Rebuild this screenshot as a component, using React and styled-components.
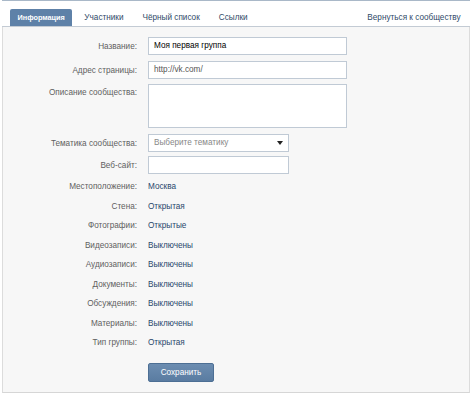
import React from 'react';
import styled, { createGlobalStyle } from 'styled-components';

const Global = createGlobalStyle`
  body {
    margin: 0;
    background: #fff;
    font-family: "Liberation Sans", Arial, sans-serif;
    font-size: 8.2px;
  }
`;

const Page = styled.div`
  width: 468px;
  margin-left: 2px;
  border-top: 1px solid #a9b8c8;
`;

const TabBar = styled.div`
  display: flex;
  align-items: flex-end;
  height: 25px;
  padding: 0 0 0 8px;
  background: #fff;
  border-bottom: 1px solid #c3cbd4;
`;

const Tab = styled.div`
  padding: 0 ${p => (p.$active ? 7.5 : 9.5)}px;
  height: 17px;
  line-height: 17px;
  margin-right: ${p => (p.$active ? 2.5 : 0)}px;
  border-radius: 2px 2px 0 0;
  font-size: ${p => (p.$active ? 7.3 : 8.2)}px;
  color: ${p => (p.$active ? '#fff' : '#2f4a68')};
  background: ${p => (p.$active ? '#5e81a8' : 'transparent')};
  font-weight: ${p => (p.$active ? 'bold' : 'normal')};
  white-space: nowrap;
`;

const Spacer = styled.div`
  flex: 1;
`;

const Panel = styled.div`
  background: #f7f7f7;
  border-left: 1px solid #dcdcdc;
  border-right: 1px solid #dcdcdc;
  border-bottom: 1px solid #d6d6d6;
  padding: 10px 0 0;
  height: 366px;
  box-sizing: border-box;
`;

const Row = styled.div`
  display: grid;
  grid-template-columns: 134px 1fr;
  column-gap: 11px;
  align-items: ${p => (p.$top ? 'start' : 'center')};
  margin-bottom: ${p => p.$gap ?? 6}px;
  height: ${p => p.$h || 18}px;
`;

const Label = styled.div`
  text-align: right;
  color: #5f5f5f;
  padding-top: ${p => (p.$top ? 4 : 0)}px;
`;

const Value = styled.div`
  color: #29476c;
`;

const Input = styled.div`
  box-sizing: border-box;
  width: ${p => p.$w}px;
  height: ${p => p.$h || 18}px;
  background: #fff;
  border: 1px solid #c0cad5;
  padding: 3px 5px;
  color: ${p => (p.$muted ? '#555' : '#000')};
  line-height: 10px;
`;

const Select = styled(Input)`
  display: flex;
  align-items: center;
  justify-content: space-between;
  color: #888;
  padding-right: 5px;
`;

const Button = styled.div`
  width: 66px;
  height: 19px;
  margin-top: 10px;
  line-height: 17px;
  text-align: center;
  color: #fff;
  background: linear-gradient(#6c8db1, #5a7ca1);
  border: 1px solid #4d6f94;
  border-radius: 2px;
  box-sizing: border-box;
`;

const info = [
  ['Местоположение:', 'Москва'],
  ['Стена:', 'Открытая'],
  ['Фотографии:', 'Открытые'],
  ['Видеозаписи:', 'Выключены'],
  ['Аудиозаписи:', 'Выключены'],
  ['Документы:', 'Выключены'],
  ['Обсуждения:', 'Выключены'],
  ['Материалы:', 'Выключены'],
  ['Тип группы:', 'Открытая'],
];

export default function App() {
  return (
    <>
      <Global />
      <Page>
        <TabBar>
          <Tab $active>Информация</Tab>
          <Tab>Участники</Tab>
          <Tab>Чёрный список</Tab>
          <Tab>Ссылки</Tab>
          <Spacer />
          <Tab>Вернуться к сообществу</Tab>
        </TabBar>
        <Panel>
          <Row>
            <Label>Название:</Label>
            <Input $w={199}>Моя первая группа</Input>
          </Row>
          <Row $gap={5}>
            <Label>Адрес страницы:</Label>
            <Input $w={199} $muted>http://vk.com/</Input>
          </Row>
          <Row $top $h={44}>
            <Label $top>Описание сообщества:</Label>
            <Input $w={199} $h={44} />
          </Row>
          <Row $gap={4}>
            <Label>Тематика сообщества:</Label>
            <Select $w={141}>
              <span>Выберите тематику</span>
              <svg width="6" height="4" viewBox="0 0 6 4">
                <path d="M0 0h6L3 4z" fill="#222" />
              </svg>
            </Select>
          </Row>
          <Row $gap={3}>
            <Label>Веб-сайт:</Label>
            <Input $w={141} />
          </Row>
          {info.map(([l, v]) => (
            <Row key={l} $gap={0} $h={19.5}>
              <Label>{l}</Label>
              <Value>{v}</Value>
            </Row>
          ))}
          <Row $gap={0} $h={29}>
            <span />
            <Button>Сохранить</Button>
          </Row>
        </Panel>
      </Page>
    </>
  );
}
